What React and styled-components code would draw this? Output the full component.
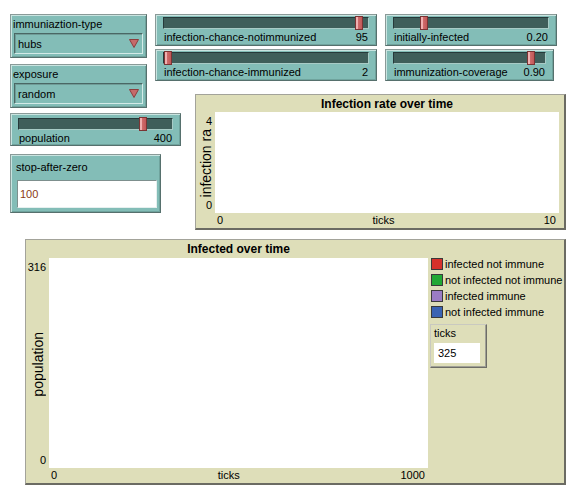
import React from 'react';
import styled, { createGlobalStyle } from 'styled-components';

const Global = createGlobalStyle`
  html, body { margin: 0; padding: 0; background: #ffffff; }
  body {
    font-family: "Liberation Sans", Arial, sans-serif;
    font-size: 11px;
    color: #000;
  }
`;

const TEAL = '#83bdb7';
const BEIGE = '#dedeb9';

/* The NetLogo interface tab: a free canvas on which each widget sits at its own place. */
const Canvas = styled.div`
  position: relative;
  width: 582px;
  height: 495px;
  overflow: hidden;
  background: #fff;
`;

const Placed = styled.div`
  position: absolute;
  left: ${(p) => p.$x}px;
  top: ${(p) => p.$y}px;
  width: ${(p) => p.$w}px;
  height: ${(p) => p.$h}px;
  box-sizing: border-box;
`;

const Tile = styled(Placed)`
  background: ${TEAL};
  border: 1px solid;
  border-color: #8a9a98 #56706d #56706d #8a9a98;
  box-shadow: inset 1px 1px 0 #c9e4e0, inset -1px -1px 0 #6fa39d;
`;

/* ---------- chooser ---------- */
const ChooserBox = styled(Tile)`
  display: flex;
  flex-direction: column;
  padding: 3px 3px 3px 3px;
  gap: 2px;
`;

const WidgetLabel = styled.div`
  line-height: 13px;
  height: 13px;
  margin-left: -1px;
  white-space: nowrap;
`;

const Select = styled.div`
  height: 21px;
  box-sizing: border-box;
  display: flex;
  align-items: center;
  justify-content: space-between;
  padding: 0 3px 0 3px;
  border: 1px solid;
  border-color: #4a6764 #d4ebe8 #d4ebe8 #4a6764;
  box-shadow: inset 1px 1px 0 #6f9c97;
`;

const Arrow = () => (
  <svg width="10" height="9" viewBox="0 0 10 9">
    <polygon points="0.5,0.5 9.5,0.5 5,8.5" fill="#c66a6a" stroke="#8c3d3d" strokeWidth="1" />
  </svg>
);

/* ---------- slider ---------- */
const SliderBox = styled(Tile)`
  display: flex;
  flex-direction: column;
  padding: ${(p) => p.$padTop}px 7px 0 7px;
`;

const Track = styled.div`
  position: relative;
  height: 12px;
  box-sizing: border-box;
  background: #3f5e5a;
  border: 1px solid;
  border-color: #26393a #a8cbc6 #a8cbc6 #26393a;
`;

const Thumb = styled.div`
  position: absolute;
  top: -2px;
  width: 8px;
  height: 14px;
  box-sizing: border-box;
  background: linear-gradient(90deg, #f0b0b0 0px, #f0b0b0 2px, #d06c6c 2px, #c25858 100%);
  border: 1px solid #7a3434;
`;

const SliderRow = styled.div`
  display: flex;
  justify-content: space-between;
  align-items: center;
  line-height: 14px;
  margin-top: 1px;
  padding: 0 1px;
  white-space: nowrap;
`;

/* ---------- input ---------- */
const InputBox = styled(Tile)`
  display: flex;
  flex-direction: column;
  padding: 5px 3px 4px 6px;
  gap: 6px;
`;

const InputLabel = styled.div`
  line-height: 14px;
  margin-left: -1px;
`;

const InputField = styled.div`
  height: 28px;
  box-sizing: border-box;
  background: #fff;
  border: 1px solid;
  border-color: #7d8f8d #e6f0ef #e6f0ef #7d8f8d;
  display: flex;
  align-items: center;
  padding-left: 2px;
  color: #8b3a14;
`;

/* ---------- plot ---------- */
const PlotBox = styled(Placed)`
  background: ${BEIGE};
  border-style: solid;
  border-width: 1px 2px 2px 1px;
  border-color: #a3a39a #6b6b63 #6b6b63 #a3a39a;
  display: grid;
  grid-template-columns: ${(p) => p.$left}px 1fr ${(p) => p.$right}px;
  grid-template-rows: ${(p) => p.$top}px 1fr 15px;
`;

const PlotTitle = styled.div`
  grid-column: 2;
  grid-row: 1;
  display: flex;
  align-items: center;
  justify-content: center;
  font-weight: bold;
  font-size: 12px;
  white-space: nowrap;
`;

const YAxis = styled.div`
  grid-column: 1;
  grid-row: 2;
  display: flex;
  flex-direction: column;
  align-items: stretch;
  padding: 3px 0 1px 0;
  min-height: 0;
`;

const YTick = styled.div`
  text-align: right;
  padding-right: 3px;
  line-height: 13px;
`;

const YTitleWrap = styled.div`
  flex: 1;
  display: flex;
  align-items: center;
  justify-content: center;
  min-height: 0;
  overflow: visible;
`;

const YTitle = styled.div`
  writing-mode: vertical-rl;
  transform: rotate(180deg);
  font-size: 14px;
  line-height: 16px;
  white-space: nowrap;
`;

const PlotArea = styled.div`
  grid-column: 2;
  grid-row: 2;
  background: #fff;
`;

const XAxis = styled.div`
  grid-column: 2;
  grid-row: 3;
  display: flex;
  justify-content: space-between;
  align-items: center;
  padding: 0 3px 0 2px;
  line-height: 15px;
`;

const Legend = styled.div`
  grid-column: 3;
  grid-row: 2;
  display: flex;
  flex-direction: column;
  padding-left: 3px;
`;

const LegendRow = styled.div`
  display: flex;
  align-items: center;
  height: 16px;
  gap: 2px;
  white-space: nowrap;
  margin-top: -2px;
  margin-bottom: 2px;
`;

const Swatch = styled.span`
  width: 12px;
  height: 12px;
  box-sizing: border-box;
  background: ${(p) => p.$c};
  border: 1px solid #3a3a3a;
  flex: none;
`;

/* ---------- monitor ---------- */
const MonitorBox = styled(Placed)`
  background: ${BEIGE};
  border: 1px solid;
  border-color: #c9c9c0 #6d6d66 #6d6d66 #c9c9c0;
  box-shadow: inset -1px -1px 0 #a0a096, 0 0 0 0 transparent;
  display: flex;
  flex-direction: column;
  padding: 1px 6px 4px 3px;
  gap: 3px;
`;

const MonitorLabel = styled.div`
  line-height: 14px;
`;

const MonitorValue = styled.div`
  height: 20px;
  background: #fff;
  display: flex;
  align-items: center;
  padding-left: 4px;
`;

const choosers = [
  { x: 10, y: 14, label: 'immuniaztion-type', value: 'hubs' },
  { x: 10, y: 64, label: 'exposure', value: 'random' },
];

const sliders = [
  { x: 155, y: 14, w: 222, h: 32, pad: 2, label: 'infection-chance-notimmunized', value: '95', frac: 0.975 },
  { x: 155, y: 49, w: 222, h: 32, pad: 2, label: 'infection-chance-immunized', value: '2', frac: 0 },
  { x: 385, y: 14, w: 172, h: 32, pad: 2, label: 'initially-infected', value: '0.20', frac: 0.177 },
  { x: 385, y: 49, w: 169, h: 32, pad: 2, label: 'immunization-coverage', value: '0.90', frac: 0.93 },
  { x: 10, y: 113, w: 171, h: 33, pad: 4, label: 'population', value: '400', frac: 0.83 },
];

const legend = [
  { c: '#d6312b', t: 'infected not immune' },
  { c: '#20a834', t: 'not infected not immune' },
  { c: '#9a7cc4', t: 'infected immune' },
  { c: '#3a63b3', t: 'not infected immune' },
];

function Slider({ s }) {
  return (
    <SliderBox $x={s.x} $y={s.y} $w={s.w} $h={s.h} $padTop={s.pad}>
      <Track>
        <Thumb style={{ left: `calc((100% - 8px) * ${s.frac})` }} />
      </Track>
      <SliderRow>
        <span>{s.label}</span>
        <span>{s.value}</span>
      </SliderRow>
    </SliderBox>
  );
}

export default function App() {
  return (
    <>
      <Global />
      <Canvas>
        {choosers.map((c) => (
          <ChooserBox key={c.label} $x={c.x} $y={c.y} $w={137} $h={44}>
            <WidgetLabel>{c.label}</WidgetLabel>
            <Select>
              <span>{c.value}</span>
              <Arrow />
            </Select>
          </ChooserBox>
        ))}

        {sliders.map((s) => (
          <Slider key={s.label} s={s} />
        ))}

        <InputBox $x={10} $y={154} $w={151} $h={59}>
          <InputLabel>stop-after-zero</InputLabel>
          <InputField>100</InputField>
        </InputBox>

        <PlotBox $x={195} $y={94} $w={371} $h={136} $left={19} $right={5} $top={17}>
          <PlotTitle>Infection rate over time</PlotTitle>
          <YAxis>
            <YTick>4</YTick>
            <YTitleWrap>
              <YTitle>infection ra</YTitle>
            </YTitleWrap>
            <YTick>0</YTick>
          </YAxis>
          <PlotArea />
          <XAxis>
            <span>0</span>
            <span>ticks</span>
            <span>10</span>
          </XAxis>
        </PlotBox>

        <PlotBox $x={25} $y={239} $w={541} $h={246} $left={23} $right={136} $top={18}>
          <PlotTitle>Infected over time</PlotTitle>
          <YAxis>
            <YTick>316</YTick>
            <YTitleWrap>
              <YTitle>population</YTitle>
            </YTitleWrap>
            <YTick>0</YTick>
          </YAxis>
          <PlotArea />
          <Legend>
            {legend.map((l) => (
              <LegendRow key={l.t}>
                <Swatch $c={l.c} />
                <span>{l.t}</span>
              </LegendRow>
            ))}
          </Legend>
          <XAxis>
            <span>0</span>
            <span>ticks</span>
            <span>1000</span>
          </XAxis>
        </PlotBox>

        <MonitorBox $x={430} $y={324} $w={57} $h={44}>
          <MonitorLabel>ticks</MonitorLabel>
          <MonitorValue>325</MonitorValue>
        </MonitorBox>
      </Canvas>
    </>
  );
}
